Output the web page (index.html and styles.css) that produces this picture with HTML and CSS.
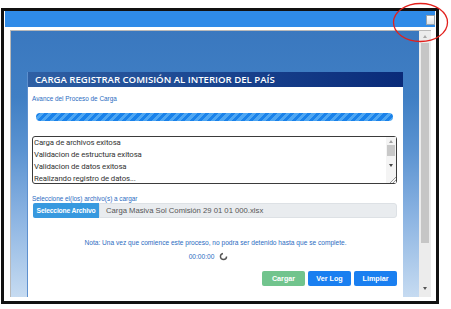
FILE: index.html
```html
<!DOCTYPE html>
<html lang="es">
<head>
<meta charset="utf-8">
<link rel="stylesheet" href="styles.css">
</head>
<body>
<div class="frame">
  <div class="titlebar"><span class="max-btn"></span></div>
  <div class="viewport">
    <div class="page">
      <div class="dialog">
        <div class="dlg-head">CARGA REGISTRAR COMISIÓN AL INTERIOR DEL PAÍS</div>
        <div class="dlg-body">
          <div class="lbl">Avance del Proceso de Carga</div>
          <div class="progress"></div>
          <div class="log">
            <div class="log-lines">
              <div>Carga de archivos exitosa</div>
              <div>Validacion de estructura exitosa</div>
              <div>Validacion de datos exitosa</div>
              <div>Realizando registro de datos...</div>
            </div>
            <div class="log-scroll">
              <span class="arr-up"></span>
              <span class="log-thumb"></span>
              <span class="arr-down"></span>
              <span class="grip"></span>
            </div>
          </div>
          <div class="lbl lbl2">Seleccione el(los) archivo(s) a cargar</div>
          <div class="file-row">
            <span class="btn-file">Seleccione Archivo</span>
            <span class="file-name">Carga Masiva Sol Comisión 29 01 01 000.xlsx</span>
          </div>
          <div class="note">Nota: Una vez que comience este proceso, no podra ser detenido hasta que se complete.</div>
          <div class="timer">00:00:00
            <svg class="spin" width="9" height="9" viewBox="0 0 10 10"><circle cx="5" cy="5" r="3.4" fill="none" stroke="#555" stroke-width="1.6" stroke-dasharray="15 6"/></svg>
          </div>
          <div class="actions">
            <span class="btn btn-green">Cargar</span>
            <span class="btn btn-blue">Ver Log</span>
            <span class="btn btn-blue">Limpiar</span>
          </div>
        </div>
      </div>
    </div>
    <div class="vscroll">
      <span class="arr-up"></span>
      <span class="thumb"></span>
      <span class="arr-down"></span>
    </div>
  </div>
</div>
<svg class="annot" width="58" height="42" viewBox="0 0 58 42"><ellipse cx="28.5" cy="20.5" rx="27" ry="19" fill="none" stroke="#e2201c" stroke-width="1.3"/></svg>
</body>
</html>
```
FILE: styles.css
```css
html, body { margin: 0; padding: 0; background: #fff; }
body { position: relative; width: 451px; height: 309px; overflow: hidden; }

.frame {
  box-sizing: border-box;
  margin: 8px 0 0 1px;
  width: 438px;
  height: 296px;
  border: 3px solid #111;
  background: #fff;
  display: flex;
  flex-direction: column;
}
.titlebar {
  height: 16px;
  margin: 0 1px 0 1px;
  background: #2f8be8;
  display: flex;
  justify-content: flex-end;
  align-items: center;
}
.max-btn {
  width: 7px;
  height: 8px;
  border: 1px solid #9aa4ad;
  background: linear-gradient(#ffffff, #dfe3e8);
  margin-top: 2px;
}
.viewport {
  box-sizing: border-box;
  margin: 3px 0 0 6px;
  width: 421px;
  height: 267px;
  border-top: 1px solid #b9b9b9;
  border-left: 1px solid #b9b9b9;
  display: flex;
}
.page {
  flex: 1;
  overflow: hidden;
  padding: 41px 0 0 16px;
  background: linear-gradient(180deg, #3a78bf 0%, #407fc4 25%, #5b93d1 45%, #8cb4e2 70%, #c6dbf1 100%);
}
.dialog {
  width: 376px;
  height: 260px;
  background: #fff;
  border-left: 1px solid #5d90cf;
  box-sizing: border-box;
}
.dlg-head {
  height: 15px;
  padding-left: 7px;
  background: linear-gradient(90deg, #2f60a4 0%, #1a4590 50%, #0a2b79 100%);
  color: #fff;
  font: 600 9.6px/16px "Open Sans", sans-serif;
  white-space: nowrap;
}
.dlg-body { padding: 0 6px 0 4px; }
.lbl {
  margin-top: 8px;
  height: 8px;
  font: 6.4px/8px "Liberation Sans", Arial, sans-serif;
  color: #2b6cbf;
  white-space: nowrap;
}
.lbl2 { margin-top: 11px; }
.progress {
  margin: 10px 4px 0 4px;
  height: 8px;
  border-radius: 4px;
  background: repeating-linear-gradient(135deg, #1a82ea 0px, #1a82ea 3px, #4ea6f2 3px, #4ea6f2 6px);
}
.log {
  box-sizing: border-box;
  margin-top: 15px;
  height: 48px;
  border: 1.5px solid #3b3b3b;
  border-radius: 3px;
  display: flex;
  background: #fff;
}
.log-lines {
  flex: 1;
  padding-left: 1px;
  font: 7.8px/12px Roboto, "Open Sans", sans-serif;
  letter-spacing: -0.1px;
  color: #333;
  white-space: nowrap;
}
.log-scroll {
  width: 10px;
  position: relative;
  background: #f4f4f4;
  display: flex;
  flex-direction: column;
  align-items: center;
}
.log-thumb {
  display: block;
  width: 8px;
  height: 11px;
  background: #c8c8c8;
  margin-top: 2px;
}
.arr-up, .arr-down {
  display: block;
  width: 0;
  height: 0;
  border-left: 2.5px solid transparent;
  border-right: 2.5px solid transparent;
}
.arr-up { border-bottom: 3px solid #a0a0a0; margin-top: 3px; }
.arr-down { border-top: 3px solid #444; margin-top: 8px; }
.grip {
  position: absolute;
  right: 0;
  bottom: 0;
  width: 6px;
  height: 6px;
  background: linear-gradient(135deg, transparent 45%, #999 45%, #999 55%, transparent 55%, transparent 70%, #999 70%, #999 80%, transparent 80%);
}
.file-row {
  display: flex;
  height: 15px;
}
.btn-file {
  width: 66px;
  margin-left: 1px;
  background: #3799df;
  color: #fff;
  border-radius: 2px 0 0 2px;
  font: 600 6.8px/15px "Liberation Sans", Arial, sans-serif;
  text-align: center;
  white-space: nowrap;
  letter-spacing: -0.2px;
}
.file-name {
  flex: 1;
  background: #e9ecef;
  border: 1px solid #dde1e5;
  border-radius: 0 3px 3px 0;
  padding-left: 6px;
  color: #555;
  font: 7.7px/13px "Liberation Sans", Arial, sans-serif;
  white-space: nowrap;
}
.note {
  margin-top: 21px;
  height: 8px;
  text-align: center;
  font: 6.6px/8px "Liberation Sans", Arial, sans-serif;
  color: #2b6cbf;
  white-space: nowrap;
  padding-left: 2px;
}
.timer {
  margin-top: 5px;
  height: 9px;
  display: flex;
  justify-content: center;
  align-items: center;
  gap: 5px;
  font: 6.6px/9px "Liberation Sans", Arial, sans-serif;
  color: #2b6cbf;
  padding-right: 12px;
}
.spin { display: block; }
.actions {
  margin-top: 10px;
  display: flex;
  justify-content: flex-end;
  gap: 3px;
}
.btn {
  width: 43px;
  height: 15px;
  border-radius: 2px;
  color: #fff;
  text-align: center;
  font: 600 7.2px/15px "Liberation Sans", Arial, sans-serif;
}
.btn-green { background: #71c48d; }
.btn-blue { background: #1a7ff0; }

.vscroll {
  width: 12px;
  background: #ececec;
  display: flex;
  flex-direction: column;
  align-items: center;
}
.vscroll .arr-up { margin-top: 4px; border-bottom-color: #a8a8a8; }
.vscroll .thumb {
  display: block;
  width: 8px;
  height: 200px;
  margin-top: 5px;
  background: #c6c6c6;
}
.vscroll .arr-down { margin-top: 44px; border-top-color: #555; }

.annot {
  position: absolute;
  left: 392px;
  top: 2px;
}
```
